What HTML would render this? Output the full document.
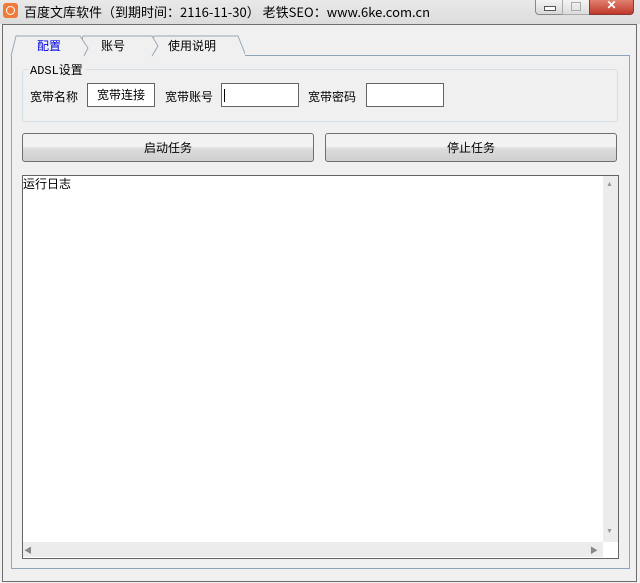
<html><head><style>
body{margin:0;width:640px;height:583px;background:#f0f0f0;font-family:"Liberation Sans","Noto Sans CJK SC",sans-serif;font-size:12px;position:relative;overflow:hidden}
.a{position:absolute}
.cn{font-family:"Noto Sans CJK SC","WenQuanYi Zen Hei",sans-serif}
</style></head><body>
<div class="a" style="left:0;top:0;width:640px;height:24px;background:linear-gradient(#e9e9e9,#dcdcdc)"></div>
<div class="a" style="left:3px;top:3px;width:15px;height:15px;background:#f07a3a;border-radius:3px"><div class="a" style="left:3px;top:3px;width:7px;height:7px;border:1px solid #fff;border-radius:50%"></div></div>
<div class="a cn" style="left:24px;top:2px;font-size:13px;color:#000">百度文库软件（到期时间：2116-11-30） 老铁SEO：www.6ke.com.cn</div>
<div class="a" style="left:535px;top:0;width:26px;height:14px;border:1px solid #888;border-top:0;border-radius:0 0 0 4px;background:linear-gradient(#f4f4f4,#d8d8d8)"><div class="a" style="left:8px;top:6px;width:10px;height:3px;border:1px solid #555;background:#fff"></div></div>
<div class="a" style="left:562px;top:0;width:26px;height:14px;border:1px solid #aaa;border-top:0;background:linear-gradient(#f4f4f4,#dcdcdc)"><div class="a" style="left:8px;top:2px;width:8px;height:7px;border:1px solid #aaa"></div></div>
<div class="a" style="left:589px;top:0;width:43px;height:14px;border:1px solid #8a3a30;border-top:0;border-radius:0 0 4px 0;background:linear-gradient(#e08070,#c0392b);color:#fff;text-align:center;font-weight:bold;font-size:12px;line-height:11px">✕</div>
<div class="a" style="left:2px;top:24px;width:633px;height:556px;border:1px solid #6d6d6d;background:#f0f0f0"></div>
<div class="a" style="left:11px;top:55px;width:617px;height:512px;border:1px solid #8ea4b8;background:#f0f0f0"></div>
<svg class="a" style="left:10px;top:34px" width="235" height="23"><g fill="#f0f0f0" stroke="#99a8b6"><path d="M135 22 L144 2 L228 2 L236 22"/><path d="M68 22 L73 2 L142 2 L148 12 L142 22"/><path d="M1 22 L6 2 L70 2 L78 14 L74 22" fill="#f0f0f0"/></g><rect x="2" y="21" width="70" height="3" fill="#f0f0f0"/></svg>
<div class="a cn" style="left:37px;top:37px;color:#0000e0">配置</div>
<div class="a cn" style="left:101px;top:37px">账号</div>
<div class="a cn" style="left:168px;top:37px">使用说明</div>
<div class="a" style="left:22px;top:69px;width:594px;height:51px;border:1px solid #d5dfe5;border-radius:3px"></div>
<div class="a" style="left:28px;top:61px;background:#f0f0f0;padding:0 2px;font-family:'Liberation Mono','Noto Sans CJK SC',monospace;font-size:12px">ADSL设置</div>
<div class="a cn" style="left:30px;top:88px">宽带名称</div>
<div class="a cn" style="left:87px;top:83px;width:66px;height:22px;border:1px solid #646464;background:#fff;text-align:center;line-height:22px">宽带连接</div>
<div class="a cn" style="left:165px;top:88px">宽带账号</div>
<div class="a" style="left:221px;top:83px;width:76px;height:22px;border:1px solid #646464;background:#fff"><div class="a" style="left:2px;top:5px;width:1px;height:13px;background:#000"></div></div>
<div class="a cn" style="left:308px;top:88px">宽带密码</div>
<div class="a" style="left:366px;top:83px;width:76px;height:22px;border:1px solid #646464;background:#fff"></div>
<div class="a cn" style="left:22px;top:133px;width:290px;height:27px;border:1px solid #707070;border-radius:3px;background:linear-gradient(#f2f2f2 45%,#dcdcdc 55%,#d0d0d0);text-align:center;line-height:27px">启动任务</div>
<div class="a cn" style="left:325px;top:133px;width:290px;height:27px;border:1px solid #707070;border-radius:3px;background:linear-gradient(#f2f2f2 45%,#dcdcdc 55%,#d0d0d0);text-align:center;line-height:27px">停止任务</div>
<div class="a" style="left:22px;top:175px;width:595px;height:382px;border:1px solid #646464;background:#fff"></div>
<div class="a cn" style="left:23px;top:175px">运行日志</div>
<div class="a" style="left:603px;top:176px;width:15px;height:366px;background:#ececec"></div>
<div class="a" style="left:23px;top:542px;width:580px;height:15px;background:#ececec"></div>
<div class="a" style="left:606px;top:181px;color:#999;font-size:7px">▲</div>
<div class="a" style="left:606px;top:528px;color:#999;font-size:7px">▼</div>
<div class="a" style="left:24px;top:545px;color:#888;font-size:8px">◀</div>
<div class="a" style="left:590px;top:545px;color:#888;font-size:8px">▶</div>
</body></html>
